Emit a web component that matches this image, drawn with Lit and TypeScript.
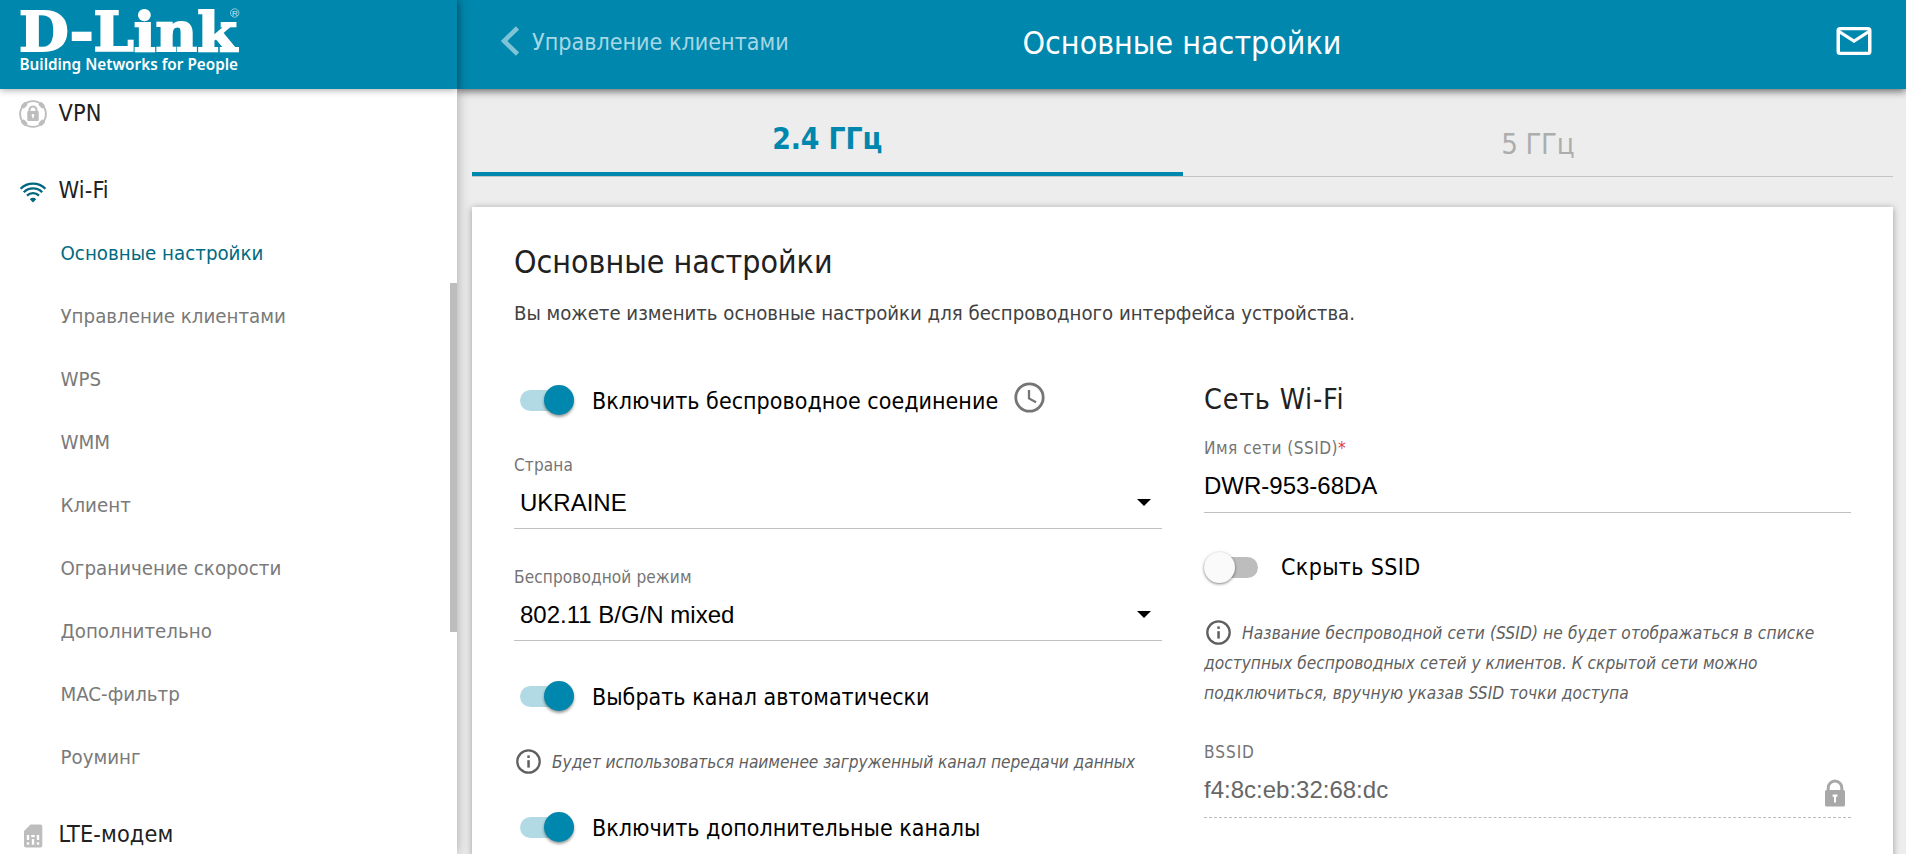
import { LitElement, html, svg, css } from "lit";
import { customElement, property } from "lit/decorators.js";
import { classMap } from "lit/directives/class-map.js";

const infoIcon = html`<svg class="info-icon" width="25" height="25" viewBox="0 0 25 25">
  <circle cx="12.5" cy="12.5" r="11.2" fill="none" stroke="#5f5f5f" stroke-width="2.3" />
  <rect x="11.3" y="6.4" width="2.5" height="2.5" fill="#5f5f5f" />
  <rect x="11.3" y="11.2" width="2.5" height="7.4" fill="#5f5f5f" />
</svg>`;

const blobs = [45, 135, 225, 315].map(
  (a) => svg`<rect x="10.2" y="-3.4" width="4.4" height="6.8" rx="2" transform="rotate(${a})" />`
);

const vpnIcon = html`<svg class="icon" width="28" height="28" viewBox="-14 -14 28 28" fill="#bdbdbd">
  <circle r="12.9" fill="none" stroke="#bdbdbd" stroke-width="1.9" />
  ${blobs}
  <path d="M-3.5 -2.5V-4a3.5 3.5 0 0 1 7 0V-2.5" fill="none" stroke="#bdbdbd" stroke-width="2.1" />
  <rect x="-5.7" y="-3" width="11.4" height="10" rx="1" />
  <circle cx="0" cy="1.2" r="1.3" fill="#fff" />
  <rect x="-0.7" y="1.4" width="1.4" height="2.8" fill="#fff" />
</svg>`;

const wifiIcon = html`<svg class="icon" width="28" height="28" viewBox="-14 -14 28 28" fill="none" stroke="#00677f" stroke-width="2.3">
  <path d="M-12.4 -2.2A17.5 17.5 0 0 1 12.4 -2.2" />
  <path d="M-9.2 1.2A13 13 0 0 1 9.2 1.2" />
  <path d="M-6 4.6A8.5 8.5 0 0 1 6 4.6" />
  <path d="M0 11.4L-3.2 8.2A4.5 4.5 0 0 1 3.2 8.2Z" fill="#00677f" stroke="none" />
</svg>`;

const simIcon = html`<svg class="icon" width="28" height="28" viewBox="0 0 28 28">
  <path d="M11.5 3.5H21.3a2 2 0 0 1 2 2V24.5a2 2 0 0 1-2 2H7a2 2 0 0 1-2-2V10Z" fill="#bdbdbd" />
  <g fill="#fff">
    <rect x="7.8" y="14" width="2.4" height="5" /><rect x="12.2" y="14" width="3.6" height="2.2" /><rect x="17.8" y="14" width="2.4" height="5" />
    <rect x="7.8" y="21.3" width="2.4" height="2.4" /><rect x="12.8" y="18.1" width="2.4" height="5.6" /><rect x="17.8" y="21.3" width="2.4" height="2.4" />
  </g>
</svg>`;

@customElement("ui-toggle")
class UiToggle extends LitElement {
  @property({ type: Boolean }) on = false;

  static styles = css`
    :host { display: flex; align-items: center; height: 60px; }
    .slot { width: 78px; height: 30px; flex: none; display: flex; align-items: center; box-sizing: border-box; padding-left: 6px; }
    .track { width: 54px; height: 21px; border-radius: 11px; background: #b1dae4; display: flex; align-items: center; justify-content: flex-end; }
    .knob { width: 30px; height: 30px; border-radius: 50%; background: #0087ad; flex: none; box-shadow: 0 2px 3px rgba(0, 0, 0, 0.4); }
    .off .track { background: #bdbdbd; justify-content: flex-start; }
    .off .knob { width: 31px; height: 31px; background: #fafafa; box-shadow: 0 1px 3px rgba(0, 0, 0, 0.5); }
    .slot.off { padding-left: 0; width: 77px; }
    .label { padding-top: 1px; font: 23px "DejaVu Sans Condensed", "DejaVu Sans", sans-serif; color: #000; white-space: nowrap; letter-spacing: 0.03px; }
    .label.plain { padding-top: 0; letter-spacing: 0.35px; }
  `;

  render() {
    return html`<div class=${classMap({ slot: true, off: !this.on })}>
        <div class="track"><div class="knob"></div></div>
      </div>
      <div class=${classMap({ label: true, plain: !this.on })}><slot></slot></div>`;
  }
}

@customElement("app-root")
class AppRoot extends LitElement {
  static styles = css`
    :host {
      display: flex; height: 854px; overflow: hidden; background: #ededed;
      font-family: "DejaVu Sans Condensed", "DejaVu Sans", sans-serif; color: #212121;
    }
    svg { display: block; flex: none; }
    .sidebar { width: 457px; flex: none; height: 854px; background: #fff; position: relative; z-index: 2; box-shadow: 0 0 12px rgba(0, 0, 0, 0.3); display: flex; flex-direction: column; }
    .brand { height: 89px; flex: none; background: #0087ad; position: relative; z-index: 1; box-shadow: 0 1px 7px rgba(0, 0, 0, 0.35); }
    .menu { flex: 1; min-height: 0; overflow: hidden; margin-top: -8px; display: flex; flex-direction: column; gap: 14px; padding-top: 1px; }
    .group { flex: none; }
    .main-item { display: flex; flex: none; align-items: center; height: 63px; padding-left: 19px; gap: 11.5px; font-size: 23.3px; letter-spacing: 0.1px; }
    .main-item span { margin-top: -2px; }
    .sub { height: 63px; line-height: 63px; padding-left: 60.5px; font-size: 20.3px; color: #7a7a7a; white-space: nowrap; }
    .sub.active { color: #006a80; }
    .thumb { position: absolute; right: 0; top: 283px; width: 7px; height: 349px; background: #bdbdbd; }

    .content { flex: 1; min-width: 0; height: 854px; display: flex; flex-direction: column; }
    .topbar { height: 89px; flex: none; box-sizing: border-box; background: #0087ad; box-shadow: 0 2px 8px rgba(0, 0, 0, 0.6); display: grid; grid-template-columns: 1fr auto 1fr; align-items: center; padding: 0 31px 4px 44px; position: relative; }
    .back { display: flex; align-items: center; gap: 13px; font-size: 23.1px; color: #a6d7e4; white-space: nowrap; margin-top: -3px; }
    .back span { margin-top: 2px; }
    .title { font-size: 31.9px; color: #fff; line-height: 44px; margin: 0 0 0 -12px; white-space: nowrap; }
    .mail { justify-self: end; margin-top: -3px; }

    .tabs { margin: 0 13px 0 15px; height: 87px; flex: none; display: flex; border-bottom: 1px solid #c4c4c4; }
    .tab { flex: 1; display: flex; align-items: center; justify-content: center; box-sizing: border-box; padding-top: 22px; font-size: 29.2px; letter-spacing: -0.4px; color: #adadad; }
    .tab.active { border-bottom: 4px solid #0087ad; padding-top: 16px; font-size: 29.8px; font-weight: 700; letter-spacing: -0.1px; color: #0087ad; }

    .card { margin: 30px 13px 0 15px; flex: 1; box-sizing: border-box; padding: 33px 42px 0; background: #fff; box-shadow: 0 1px 7px rgba(0, 0, 0, 0.35); }
    h1 { margin: 0; font-weight: 400; font-size: 31.85px; line-height: 44px; }
    .desc { margin: 14px 0 0; font-size: 20.2px; line-height: 30px; color: #424242; letter-spacing: -0.01px; }
    .cols { display: grid; grid-template-columns: 648px 647px; gap: 42px; margin-top: 42px; }
    .with-clock { display: flex; align-items: center; gap: 16px; }
    .clock { margin-top: -6px; }
    .label { font-size: 17.1px; line-height: 24px; color: #757575; letter-spacing: 0.1px; }
    .label.latin { letter-spacing: 0.95px; }
    .label.mixed { letter-spacing: 0.48px; }
    .req { color: #e53935; }
    .value { font: 24px/51px "Liberation Sans", Arial, sans-serif; color: #000; border-bottom: 1px solid #c0c0c0; display: flex; align-items: center; justify-content: space-between; }
    .select { padding: 0 11px 0 6px; }
    .input { line-height: 52px; }
    .locked { color: #666; border-bottom: 1px dashed #bdbdbd; padding: 0 6px 2px 0; }
    .lock { margin-top: 6px; }
    .info { font-size: 17.2px; line-height: 30px; font-style: italic; color: #5f5f5f; white-space: nowrap; letter-spacing: 0; }
    .info.tight { letter-spacing: -0.06px; }
    .info-line { display: flex; align-items: center; gap: 11px; padding-left: 2px; height: 30px; }
    .first { letter-spacing: 0.1px; }
    .info-icon { margin-top: -1px; }
    .f1 { margin-top: 23px; }
    .f2 { margin-top: 36px; }
    .t2 { margin-top: 25px; }
    .t4 { margin-top: 24px; margin-bottom: 21px; }
    .n1 { margin-top: 21px; }
    .t3 { margin-top: 20px; }
    h2 { margin: 10px 0 0; font-weight: 400; font-size: 28.5px; line-height: 40px; letter-spacing: 0.75px; }
    .r1 { margin-top: 16px; }
    .r2 { margin-top: 32px; }
    .logo-name { font: 700 55px "DejaVu Serif", serif; }
    .logo-tag { font: 600 16px "Noto Sans", sans-serif; }
    .logo-reg { font: 8px "Liberation Sans", sans-serif; }
  `;

  private subs = ["Основные настройки", "Управление клиентами", "WPS", "WMM", "Клиент", "Ограничение скорости", "Дополнительно", "MAC-фильтр", "Роуминг"];

  private select(label: string, value: string) {
    return html`<div class="label">${label}</div>
      <div class="value select"><span>${value}</span>
        <svg width="14" height="7" viewBox="0 0 14 7"><path d="M0 0H14L7 7Z" /></svg>
      </div>`;
  }

  render() {
    return html`
      <aside class="sidebar">
        <div class="brand">
          <svg width="300" height="89" viewBox="0 0 300 89" fill="#fff">
            <text class="logo-name" x="19" y="51" textLength="218" lengthAdjust="spacingAndGlyphs" stroke="#fff" stroke-width="2">D-Link</text>
            <text class="logo-tag" x="19.5" y="70" textLength="218.5" lengthAdjust="spacingAndGlyphs">Building Networks for People</text>
            <circle cx="234.7" cy="13" r="4.2" fill="none" stroke="#fff" stroke-opacity=".7" stroke-width=".8" />
            <text class="logo-reg" x="232" y="16" fill-opacity=".85">R</text>
          </svg>
        </div>
        <nav class="menu">
          <div class="main-item">${vpnIcon}<span>VPN</span></div>
          <div class="group">
            <div class="main-item">${wifiIcon}<span>Wi-Fi</span></div>
            ${this.subs.map((s, i) => html`<div class=${classMap({ sub: true, active: i === 0 })}>${s}</div>`)}
          </div>
          <div class="main-item">${simIcon}<span>LTE-модем</span></div>
        </nav>
        <div class="thumb"></div>
      </aside>
      <main class="content">
        <header class="topbar">
          <div class="back">
            <svg width="18" height="30" viewBox="0 0 18 30"><path d="M16.5 2L3 15L16.5 28" fill="none" stroke="#7fc3d6" stroke-width="4.6" /></svg>
            <span>Управление клиентами</span>
          </div>
          <div class="title">Основные настройки</div>
          <svg class="mail" width="42" height="42" viewBox="0 0 24 24" fill="#fff">
            <path fill-rule="evenodd" d="M4 4H20A2 2 0 0 1 22 6V18A2 2 0 0 1 20 20H4A2 2 0 0 1 2 18V6A2 2 0 0 1 4 4ZM4 18.1H20V8L12 13.2L4 8ZM12 11L20 5.9H4Z" />
          </svg>
        </header>
        <div class="tabs">
          <div class="tab active">2.4 ГГц</div>
          <div class="tab">5 ГГц</div>
        </div>
        <section class="card">
          <h1>Основные настройки</h1>
          <p class="desc">Вы можете изменить основные настройки для беспроводного интерфейса устройства.</p>
          <div class="cols">
            <div>
              <div class="with-clock">
                <ui-toggle on>Включить беспроводное соединение</ui-toggle>
                <svg class="clock" width="31" height="31" viewBox="0 0 31 31" fill="none" stroke="#757575">
                  <circle cx="15.5" cy="15.5" r="13.7" stroke-width="2.8" />
                  <path d="M15 8V16.4L22 20.3" stroke-width="2.3" />
                </svg>
              </div>
              <div class="f1">${this.select("Страна", "UKRAINE")}</div>
              <div class="f2">${this.select("Беспроводной режим", "802.11 B/G/N mixed")}</div>
              <ui-toggle class="t2" on>Выбрать канал автоматически</ui-toggle>
              <div class="info tight info-line n1">${infoIcon}<span>Будет использоваться наименее загруженный канал передачи данных</span></div>
              <ui-toggle class="t3" on>Включить дополнительные каналы</ui-toggle>
            </div>
            <div>
              <h2>Сеть Wi-Fi</h2>
              <div class="label mixed r1">Имя сети (SSID)<span class="req">*</span></div>
              <div class="value input">DWR-953-68DA</div>
              <ui-toggle class="t4">Скрыть SSID</ui-toggle>
              <div class="info">
                <div class="info-line">${infoIcon}<span class="first">Название беспроводной сети (SSID) не будет отображаться в списке</span></div>
                доступных беспроводных сетей у клиентов. К скрытой сети можно<br /><span class="first">подключиться, вручную указав SSID точки доступа</span>
              </div>
              <div class="label latin r2">BSSID</div>
              <div class="value locked"><span>f4:8c:eb:32:68:dc</span>
                <svg class="lock" width="20" height="28" viewBox="0 0 20 28">
                  <path d="M3.2 12V9a6.8 7 0 0 1 13.6 0V12" fill="none" stroke="#a8a8a8" stroke-width="3" />
                  <rect x="0" y="11" width="20" height="16.5" rx="1.5" fill="#a8a8a8" />
                  <path d="M7.6 15.6H12.4V17.8H11V23.6H9V17.8H7.6Z" fill="#fff" />
                </svg>
              </div>
            </div>
          </div>
        </section>
      </main>`;
  }
}
